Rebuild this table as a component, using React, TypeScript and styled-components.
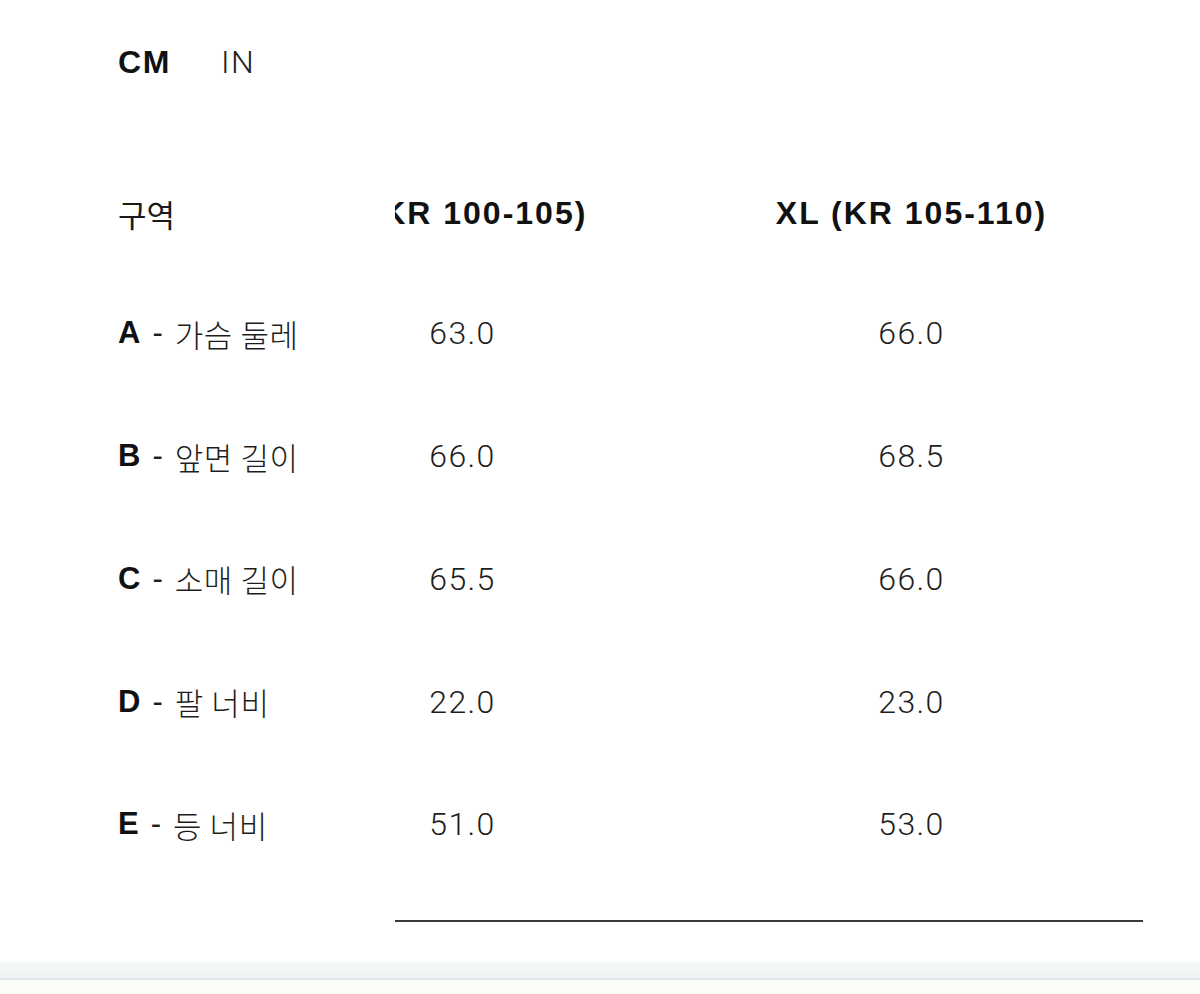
import { useLayoutEffect, useRef } from "react";
import styled, { createGlobalStyle } from "styled-components";

const GlobalStyle = createGlobalStyle`
  html, body {
    margin: 0;
    padding: 0;
    background: #fff;
  }
  body {
    font-family: "Liberation Sans", "Noto Sans CJK KR", sans-serif;
    color: #111;
  }
`;

const Page = styled.div`
  min-height: 994px;
  display: flex;
  flex-direction: column;
`;

const Units = styled.div`
  display: flex;
  align-items: center;
  gap: 50px;
  height: 124px;
  padding-left: 118px;
`;

const Unit = styled.span<{ $active?: boolean }>`
  font-family: ${(p) => (p.$active ? '"Liberation Sans"' : "Roboto")}, sans-serif;
  font-weight: ${(p) => (p.$active ? 700 : 300)};
  font-size: 32px;
  letter-spacing: 1.6px;
  color: ${(p) => (p.$active ? "#111" : "#222")};
`;

const Sizes = styled.div`
  display: flex;
  padding-left: 118px;
  margin-top: 30px;
`;

const Labels = styled.div`
  width: 277px;
  flex: none;
  display: flex;
  flex-direction: column;
`;

const HeadLabel = styled.div`
  height: 118px;
  display: flex;
  align-items: center;
  font-family: "Noto Sans CJK KR", sans-serif;
  font-size: 31px;
  font-weight: 400;
  color: #1a1a1a;
`;

const RowLabel = styled.div`
  height: 122.75px;
  display: flex;
  align-items: center;
  font-size: 31px;
  color: #1e1e1e;
  white-space: nowrap;
`;

const Letter = styled.b`
  font-family: "Liberation Sans", sans-serif;
  font-weight: 700;
  color: #111;
  margin-right: 12px;
`;

const Dash = styled.span`
  font-family: "Liberation Sans", sans-serif;
  margin-right: 12px;
`;

const Part = styled.span`
  font-family: "Noto Sans CJK KR", sans-serif;
  font-weight: 300;
  letter-spacing: 0.6px;
`;

const Scroller = styled.div`
  width: 748px;
  flex: none;
  overflow-x: auto;
  scrollbar-width: none;
  padding-bottom: 34px;
  border-bottom: 2px solid #3a3a3a;
  &::-webkit-scrollbar {
    display: none;
  }
`;

const Grid = styled.div`
  display: grid;
  grid-template-columns: 449px 449px;
  grid-template-rows: 118px repeat(5, 122.75px);
  width: max-content;
  padding-right: 8px;
`;

const Head = styled.div`
  display: flex;
  align-items: center;
  justify-content: center;
  font-family: "Liberation Sans", sans-serif;
  font-weight: 700;
  font-size: 32px;
  letter-spacing: 2px;
  color: #111;
  white-space: nowrap;
`;

const Value = styled.div`
  display: flex;
  align-items: center;
  justify-content: center;
  font-family: Roboto, sans-serif;
  font-weight: 300;
  font-size: 32px;
  letter-spacing: 1.4px;
  color: #1e1e1e;
`;

const Footer = styled.div`
  margin-top: auto;
  height: 34px;
  background: linear-gradient(
    to bottom,
    #ffffff 0px,
    #f6f8f8 3px,
    #eff3f3 18px,
    #e3e8e8 18px,
    #e3e8e8 20px,
    #fcfcf6 20px
  );
`;

const sizes = ["L (KR 100-105)", "XL (KR 105-110)"];

const rows = [
  { key: "A", name: "가슴 둘레", values: ["63.0", "66.0"] },
  { key: "B", name: "앞면 길이", values: ["66.0", "68.5"] },
  { key: "C", name: "소매 길이", values: ["65.5", "66.0"] },
  { key: "D", name: "팔 너비", values: ["22.0", "23.0"] },
  { key: "E", name: "등 너비", values: ["51.0", "53.0"] },
];

export default function App() {
  const scrollRef = useRef<HTMLDivElement>(null);

  useLayoutEffect(() => {
    if (scrollRef.current) scrollRef.current.scrollLeft = 157;
  }, []);

  return (
    <>
      <GlobalStyle />
      <Page>
        <Units>
          <Unit $active>CM</Unit>
          <Unit>IN</Unit>
        </Units>
        <Sizes>
          <Labels>
            <HeadLabel>구역</HeadLabel>
            {rows.map((r) => (
              <RowLabel key={r.key}>
                <Letter>{r.key}</Letter>
                <Dash>-</Dash>
                <Part>{r.name}</Part>
              </RowLabel>
            ))}
          </Labels>
          <Scroller ref={scrollRef}>
            <Grid>
              {sizes.map((s) => (
                <Head key={s}>{s}</Head>
              ))}
              {rows.map((r) =>
                r.values.map((v, i) => <Value key={r.key + i}>{v}</Value>)
              )}
            </Grid>
          </Scroller>
        </Sizes>
        <Footer />
      </Page>
    </>
  );
}
